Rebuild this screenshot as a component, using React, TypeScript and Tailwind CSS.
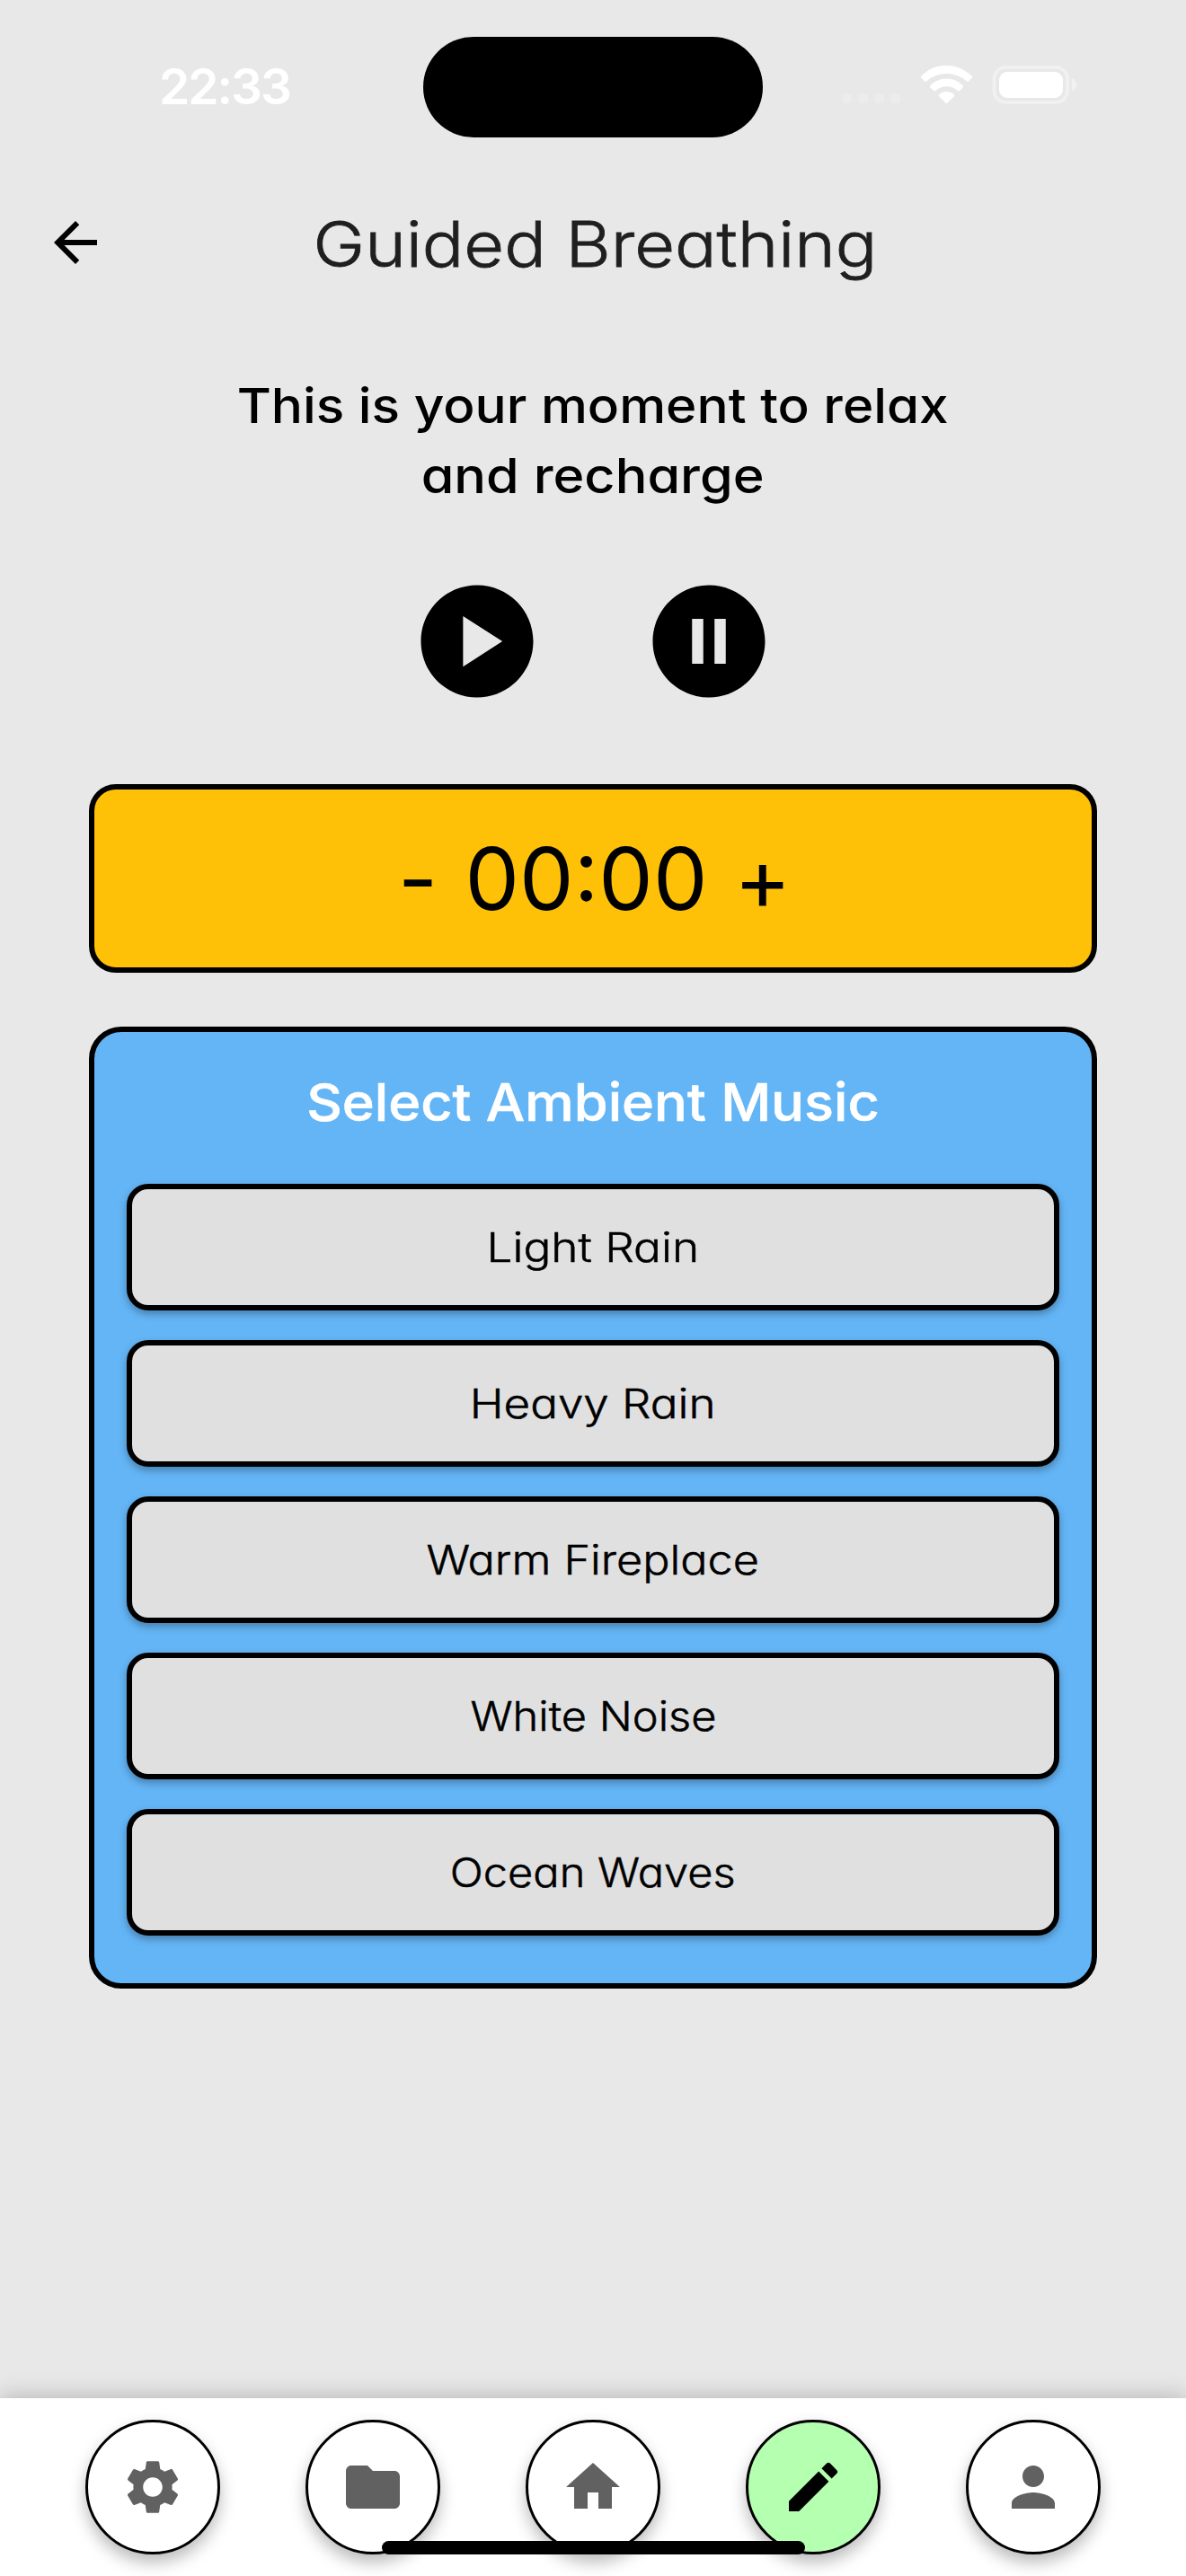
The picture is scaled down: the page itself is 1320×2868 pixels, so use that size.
import type { ReactNode } from "react";
import { MdArrowBack, MdEdit, MdFolder, MdHome, MdPerson, MdSettings } from "react-icons/md";

const tracks = [
  { name: "Light Rain", stretch: "scale-x-[1.14]" },
  { name: "Heavy Rain", stretch: "scale-x-[1.135]" },
  { name: "Warm Fireplace", stretch: "scale-x-[1.118]" },
  { name: "White Noise", stretch: "scale-x-[1.083]" },
  { name: "Ocean Waves", stretch: "scale-x-[1.083]" },
];

const tabs = [
  { label: "Settings", Icon: MdSettings, active: false },
  { label: "Library", Icon: MdFolder, active: false },
  { label: "Home", Icon: MdHome, active: false },
  { label: "Journal", Icon: MdEdit, active: true },
  { label: "Profile", Icon: MdPerson, active: false },
];

function StatusBar() {
  return (
    <div className="flex h-[186px] items-start">
      <div className="w-[471px] pt-[69px] pl-[177px] text-[55px] font-semibold leading-[54px] tracking-[-2px] text-white">
        22:33
      </div>
      <div className="mt-[41px] h-[112px] w-[378px] rounded-[56px] bg-black" />
      <svg className="mt-[50px] ml-[51px]" width="320" height="90" viewBox="0 0 320 90" fill="none">
        <g fill="#ececec">
          <rect x="37" y="54" width="11" height="11" rx="4" />
          <rect x="55" y="54" width="11" height="11" rx="4" />
          <rect x="73" y="54" width="11" height="11" rx="4" />
          <rect x="91" y="54" width="11" height="11" rx="4" />
        </g>
        <g fill="#fff">
          <path d="M153.5 23C137 23 130 30.500 125.300 34.800Q124.300 35.800 125.300 36.800L129 40.500Q130 41.500 131 40.600Q140.500 32 153.500 32Q166.500 32 176 40.600Q177 41.500 178 40.500L181.700 36.800Q182.700 35.800 181.700 34.800C177 30.500 168 23 153.500 23Z" />
          <path d="M153.500 37.500C144.500 37.500 138.500 42 135.300 45.200Q134.300 46.200 135.300 47.200L139 51Q140 52 141 51.200Q146.500 46.300 153.500 46.300Q160.500 46.300 166 51.200Q167 52 168 51L171.700 47.200Q172.700 46.200 171.700 45.200C168.500 42 162.500 37.500 153.500 37.500Z" />
          <path d="M153.500 52C149.500 52 147 53.600 145.200 55.200Q144.200 56.200 145.200 57.200L152.500 64.500Q153.500 65.400 154.500 64.500L161.800 57.200Q162.800 56.200 161.800 55.200C160 53.600 157.500 52 153.500 52Z" />
          <rect x="212" y="30" width="71" height="29" rx="9" />
        </g>
        <rect x="206.500" y="25" width="81.500" height="39" rx="13" stroke="#f1f1f1" strokeWidth="3.500" />
        <path d="M293 37.500C300 39 300 50 293 51.500Z" fill="#f1f1f1" />
      </svg>
    </div>
  );
}

function PlaybackButton({ label, children }: { label: string; children: ReactNode }) {
  return (
    <button aria-label={label}>
      <svg width="150" height="150" viewBox="0 0 24 24" fill="#000">
        {children}
      </svg>
    </button>
  );
}

export default function App() {
  return (
    <div className="relative flex h-[2868px] w-[1320px] flex-col overflow-hidden bg-[#e8e8e8] font-['Inter',sans-serif] text-black">
      <StatusBar />

      <header className="flex h-[168px] items-center px-12">
        <button className="size-[72px]" aria-label="Back">
          <MdArrowBack className="size-[72px]" />
        </button>
        <h1 className="flex-1 scale-x-[1.105] pt-[3px] pr-[72px] text-center text-[70px] font-light leading-[90px] text-[#1f1f1f] [-webkit-text-stroke:0.8px_#1f1f1f] [font-feature-settings:'cv11'] origin-[516px_50%]">
          Guided Breathing
        </h1>
      </header>

      <main className="flex flex-1 flex-col items-center px-[99px] pt-[59px] [font-feature-settings:'cv11']">
        <p className="flex flex-col items-center text-[54px] font-medium leading-[78px]">
          <span className="scale-x-[1.083]">This is your moment to relax</span>
          <span className="scale-x-[1.1]">and recharge</span>
        </p>

        <div className="mt-[70px] flex gap-[108px]">
          <PlaybackButton label="Play">
            <path d="M12 2C6.480 2 2 6.480 2 12s4.480 10 10 10 10-4.480 10-10S17.520 2 12 2zM9.500 16.500v-9l7 4.500-7 4.500z" />
          </PlaybackButton>
          <PlaybackButton label="Pause">
            <path d="M12 2C6.480 2 2 6.480 2 12s4.480 10 10 10 10-4.480 10-10S17.520 2 12 2zm-1 14H9V8h2v8zm4 0h-2V8h2v8z" />
          </PlaybackButton>
        </div>

        <div className="mt-[84px] flex h-[210px] w-full items-center justify-center gap-[27px] rounded-[30px] border-6 border-black bg-[#ffc107] text-[96px] leading-none">
          <button className="w-10 text-center">-</button>
          <span className="w-[280px] pl-[5px] text-center">00:00</span>
          <button className="w-[60px] text-center">+</button>
        </div>

        <section className="mt-[60px] flex h-[1071px] w-full flex-col rounded-[36px] border-6 border-black bg-[#64b5f6] px-9 pt-[38px]">
          <h2 className="scale-x-[1.057] text-center text-[58px] font-medium leading-[80px] text-white [-webkit-text-stroke:0.6px_#fff]">
            Select Ambient Music
          </h2>
          <div className="mt-[51px] flex flex-col gap-[33px]">
            {tracks.map((track) => (
              <button
                key={track.name}
                className="flex h-[141px] items-center justify-center rounded-3xl border-6 border-black bg-[#e0e0e0] shadow-[0_4px_8px_rgba(0,0,0,0.3)]"
              >
                <span className={`text-[45px] font-light leading-none [-webkit-text-stroke:0.5px_#000] ${track.stretch}`}>
                  {track.name}
                </span>
              </button>
            ))}
          </div>
        </section>
      </main>

      <nav className="flex h-[198px] items-start justify-evenly bg-white pt-6 shadow-[0_-2px_24px_rgba(0,0,0,0.22)]">
        {tabs.map(({ label, Icon, active }) => (
          <button
            key={label}
            aria-label={label}
            className={
              active
                ? "flex size-[150px] items-center justify-center rounded-full border-3 border-black bg-[#b5ffb0] text-black shadow-[0_9px_18px_rgba(0,0,0,0.27)]"
                : "flex size-[150px] items-center justify-center rounded-full border-3 border-black bg-white text-[#616161] shadow-[0_9px_18px_rgba(0,0,0,0.27)]"
            }
          >
            <Icon className="size-[72px]" />
          </button>
        ))}
      </nav>

      <div className="absolute bottom-6 left-[425px] h-[15px] w-[471px] rounded-full bg-black" />
    </div>
  );
}
